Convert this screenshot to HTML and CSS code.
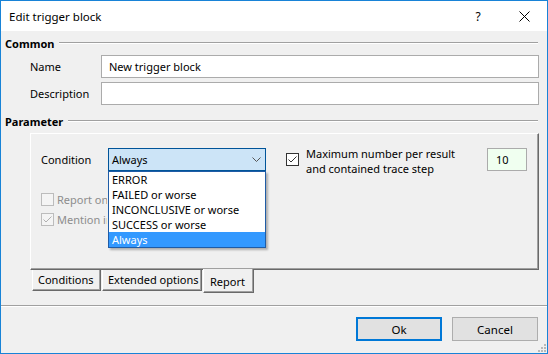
FILE: index.html
```html
<!DOCTYPE html>
<html>
<head>
<meta charset="utf-8">
<link rel="stylesheet" href="styles.css">
</head>
<body>
<div class="window">
  <div class="titlebar">
    <span class="title">Edit trigger block</span>
    <span class="tb-btn help">?</span>
    <span class="tb-btn close"><svg width="11" height="11" viewBox="0 0 11 11"><path d="M0.5 0.5 L10.5 10.5 M10.5 0.5 L0.5 10.5" stroke="#000" stroke-width="1" fill="none"/></svg></span>
  </div>
  <div class="content">
    <div class="group"><span>Common</span><div class="rule"></div></div>
    <div class="row first"><span class="lbl">Name</span><div class="input">New trigger block</div></div>
    <div class="row"><span class="lbl">Description</span><div class="input"></div></div>
    <div class="group param"><span>Parameter</span><div class="rule"></div></div>
    <div class="panel">
      <div class="left-col">
        <div class="cond-row">
          <span class="cond-lbl">Condition</span>
          <div class="combo">
            <span class="combo-text">Always</span>
            <svg class="chev" width="9" height="5" viewBox="0 0 9 5"><path d="M0.5 0.5 L4.5 4.5 L8.5 0.5" stroke="#555" stroke-width="1" fill="none"/></svg>
            <div class="droplist">
              <div class="item">ERROR</div>
              <div class="item">FAILED or worse</div>
              <div class="item">INCONCLUSIVE or worse</div>
              <div class="item">SUCCESS or worse</div>
              <div class="item sel">Always</div>
            </div>
          </div>
        </div>
        <div class="chk-row dis first-chk"><span class="box dis-box"></span><span class="chk-text">Report on failing items only</span></div>
        <div class="chk-row dis"><span class="box dis-box"><svg width="11" height="11" viewBox="0 0 11 11"><path d="M1.5 5.5 L4 8 L9.5 2.5" stroke="#b0b0b0" stroke-width="1" fill="none"/></svg></span><span class="chk-text">Mention in summary</span></div>
      </div>
      <div class="right-col">
        <span class="box main-box"><svg width="11" height="11" viewBox="0 0 11 11"><path d="M1.5 5.5 L4 8 L9.5 2.5" stroke="#333" stroke-width="1" fill="none"/></svg></span>
        <span class="max-text">Maximum number per result<br>and contained trace step</span>
        <div class="num">10</div>
      </div>
    </div>
    <div class="tabs">
      <div class="tab">Conditions</div>
      <div class="tab ext">Extended options</div>
      <div class="tab active">Report</div>
    </div>
  </div>
  <div class="footer">
    <button class="btn ok">Ok</button>
    <button class="btn cancel">Cancel</button>
    <svg class="grip" width="9" height="9" viewBox="0 0 9 9"><rect x="7" y="1" width="2" height="2" fill="#b8b8b8"/><rect x="4" y="4" width="2" height="2" fill="#b8b8b8"/><rect x="7" y="4" width="2" height="2" fill="#b8b8b8"/><rect x="1" y="7" width="2" height="2" fill="#b8b8b8"/><rect x="4" y="7" width="2" height="2" fill="#b8b8b8"/><rect x="7" y="7" width="2" height="2" fill="#b8b8b8"/></svg>
  </div>
</div>
</body>
</html>
```
FILE: styles.css
```css
* { box-sizing: border-box; margin: 0; padding: 0; }
html, body { width: 548px; height: 354px; overflow: hidden; }
body {
  font-family: "Noto Sans", sans-serif;
  font-size: 11px;
  color: #000;
  background: #f0f0f0;
}
.window {
  position: relative;
  width: 548px;
  height: 354px;
  border: 1px solid #1883d7;
  display: flex;
  flex-direction: column;
  background: #f0f0f0;
}
.titlebar {
  height: 30px;
  background: #fff;
  display: flex;
  align-items: center;
  flex-shrink: 0;
}
.title { flex: 1; padding-left: 8px; font-size: 11.5px; }
.tb-btn {
  width: 46px;
  height: 30px;
  display: flex;
  align-items: center;
  justify-content: center;
}
.help { font-size: 12px; }
.content { padding: 4px 8px 0 4px; }
.group {
  display: flex;
  align-items: center;
  height: 16px;
  font-weight: bold;
}
.group.param { margin-top: 8px; }
.rule {
  flex: 1;
  margin-left: 5px;
  margin-right: 1px;
  border-top: 1px solid #a0a0a0;
  border-bottom: 1px solid #fff;
}
.row {
  display: flex;
  align-items: center;
  height: 23px;
  margin-top: 4px;
  padding-left: 25px;
}
.lbl { width: 71px; }
.input {
  flex: 1;
  height: 23px;
  border: 1px solid #ababab;
  background: #fff;
  padding-left: 7px;
  line-height: 21px;
}
.panel {
  margin-top: 4px;
  margin-left: 25px;
  height: 137px;
  border-top: 1px solid #fff;
  border-left: 1px solid #fff;
  border-right: 1px solid #696969;
  border-bottom: 1px solid #696969;
  box-shadow: inset -1px -1px 0 #a0a0a0;
  display: flex;
  padding: 14px 0 0 10px;
}
.left-col { width: 225px; }
.cond-row { display: flex; align-items: center; height: 23px; }
.cond-lbl { width: 67px; }
.combo {
  position: relative;
  width: 158px;
  height: 23px;
  background: #cce4f7;
  border: 1px solid #005499;
  display: flex;
  align-items: center;
  padding-left: 3px;
}
.combo-text { flex: 1; }
.chev { margin-right: 4px; }
.droplist {
  position: absolute;
  left: -1px;
  top: 22px;
  width: 158px;
  height: 77px;
  background: #fff;
  border: 1px solid #1f5ca6;
  box-shadow: 2px 2px 2px rgba(0,0,0,0.28);
  z-index: 5;
}
.item {
  height: 15px;
  line-height: 15px;
  padding-left: 3px;
  white-space: nowrap;
}
.item.sel { background: #3399ff; color: #fff; }
.chk-row {
  display: flex;
  align-items: center;
  height: 13px;
  margin-top: 7px;
  white-space: nowrap;
}
.chk-row.first-chk { margin-top: 22px; }
.box {
  width: 13px;
  height: 13px;
  display: flex;
  align-items: center;
  justify-content: center;
  flex-shrink: 0;
}
.dis-box { border: 1px solid #bcbcbc; background: #f4f4f4; }
.main-box { border: 1px solid #333; background: #fff; margin-top: 5px; }
.chk-text {
  margin-left: 3px;
  color: #8d8d8d;
  width: 50px;
  overflow: hidden;
}
.right-col {
  display: flex;
  align-items: flex-start;
  margin-left: 20px;
}
.max-text {
  width: 181px;
  margin-left: 7px;
  margin-top: -2px;
  line-height: 15px;
}
.num {
  width: 40px;
  height: 23px;
  border: 1px solid #ababab;
  background: #f0fff0;
  padding-left: 8px;
  line-height: 21px;
}
.tabs {
  display: flex;
  align-items: flex-start;
  margin-left: 27px;
}
.tab {
  height: 21px;
  background: #f0f0f0;
  border-left: 1px solid #fff;
  border-right: 1px solid #696969;
  border-bottom: 1px solid #696969;
  box-shadow: inset -1px -1px 0 #a0a0a0;
  padding: 0 0 0 5px;
  line-height: 19px;
  white-space: nowrap;
}
.tab:first-child { width: 69px; }
.tab.ext { width: 100px; margin-left: 1px; }
.tab.active {
  width: 51px;
  height: 24px;
  margin-top: -1px;
  margin-left: 1px;
  padding-left: 6px;
  line-height: 25px;
}
.footer {
  margin-top: auto;
  height: 48px;
  border-top: 1px solid #a0a0a0;
  box-shadow: inset 0 1px 0 #fff;
  display: flex;
  justify-content: flex-end;
  align-items: flex-start;
  padding: 11px 9px 0 0;
  gap: 10px;
}
.btn {
  width: 86px;
  height: 24px;
  background: #e1e1e1;
  border: 1px solid #adadad;
  font-family: "Noto Sans", sans-serif;
  font-size: 11.5px;
  color: #000;
}
.btn.ok { border: 2px solid #0078d7; }
.grip { position: absolute; right: 1px; bottom: 1px; }
```
